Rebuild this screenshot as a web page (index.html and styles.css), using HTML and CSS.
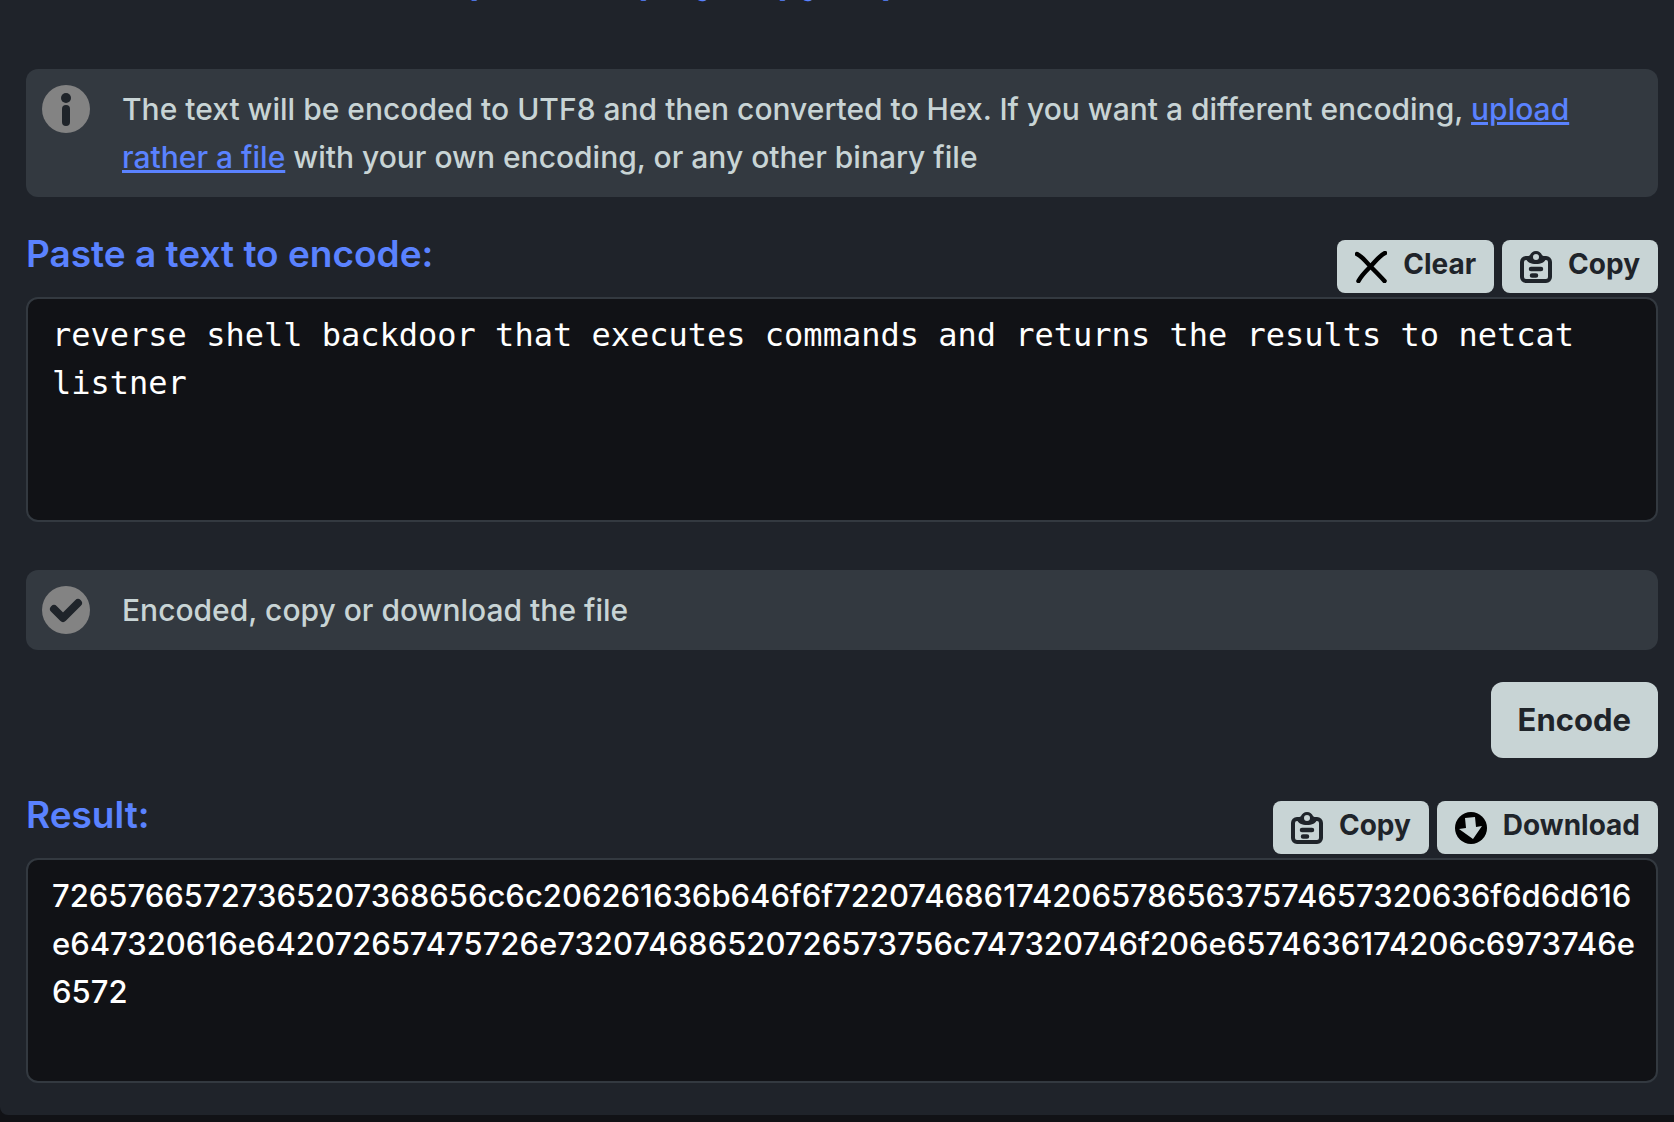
FILE: index.html
```
<!DOCTYPE html>
<html lang="en">
<head>
    <meta charset="UTF-8">
    <meta name="viewport" content="width=device-width, initial-scale=1.0">
    <title>Text to Hex</title>
    <link rel="stylesheet" href="styles.css">
</head>
<body>
    <svg class="sprite" aria-hidden="true">
        <symbol id="icon-copy" viewBox="0 0 32 32">
            <path d="M9 7H6a4 4 0 0 0-4 4v15a4 4 0 0 0 4 4h20a4 4 0 0 0 4-4V11a4 4 0 0 0-4-4h-3" fill="none" stroke="currentColor" stroke-width="4"/>
            <path fill-rule="evenodd" d="M16 0c-3 0-5 2-6 4-1 1-4 2-4 4 1 3 5 5 10 5s9-2 10-5c0-2-3-3-4-4-1-2-3-4-6-4zm0 3a3 3 0 1 1 0 6 3 3 0 0 1 0-6z" fill="currentColor"/>
            <path d="M11 18h10M12 24.500h4" fill="none" stroke="currentColor" stroke-width="4.500" stroke-linecap="round"/>
        </symbol>
    </svg>

    <main class="panel">
        <h1 class="title">Hex encoder online: imports display copy export</h1>

        <div class="message">
            <svg class="message-icon" viewBox="0 0 48 48" aria-hidden="true">
                <circle cx="24" cy="24" r="24" fill="#838383"/>
                <circle cx="24" cy="13" r="5" fill="#1f242a"/>
                <path d="M24 24v13" stroke="#1f242a" stroke-width="8" stroke-linecap="round"/>
            </svg>
            <p>The text will be encoded to UTF8 and then converted to Hex. If you want a different encoding, <a href="#">upload rather a file</a> with your own encoding, or any other binary file</p>
        </div>

        <div class="field-head">
            <label for="source">Paste a text to encode:</label>
            <div class="tools">
                <button type="button" class="tool">
                    <svg viewBox="0 0 32 32" aria-hidden="true"><path d="M2 3c6 3 9 8 14 13s9 9 13.500 14M30 2C24 5 20 11 15 16S6 25 3.500 30" fill="none" stroke="#000" stroke-width="4.500" stroke-linecap="round"/></svg>
                    <span>Clear</span>
                </button>
                <button type="button" class="tool">
                    <svg aria-hidden="true"><use href="#icon-copy"/></svg>
                    <span>Copy</span>
                </button>
            </div>
        </div>
        <textarea id="source" class="source" spellcheck="false">reverse shell backdoor that executes commands and returns the results to netcat listner</textarea>

        <div class="message">
            <svg class="message-icon" viewBox="0 0 48 48" aria-hidden="true">
                <circle cx="24" cy="24" r="24" fill="#838383"/>
                <path d="M12 23l9 9 15-15" fill="none" stroke="#1f242a" stroke-width="8" stroke-linecap="round" stroke-linejoin="round"/>
            </svg>
            <p>Encoded, copy or download the file</p>
        </div>

        <div class="actions">
            <button type="button" class="encode">Encode</button>
        </div>

        <div class="field-head">
            <label for="result">Result:</label>
            <div class="tools">
                <button type="button" class="tool">
                    <svg aria-hidden="true"><use href="#icon-copy"/></svg>
                    <span>Copy</span>
                </button>
                <button type="button" class="tool">
                    <svg viewBox="0 0 32 32" aria-hidden="true"><circle cx="16" cy="16" r="16" fill="#000"/><path d="M10 6l10-1 1 10 6-1-9 13L4 17l7-1z" fill="#c8d4d5"/></svg>
                    <span>Download</span>
                </button>
            </div>
        </div>
        <textarea id="result" class="result" readonly spellcheck="false">72657665727365207368656c6c206261636b646f6f72207468617420657865637574657320636f6d6d616e647320616e642072657475726e732074686520726573756c747320746f206e6574636174206c6973746e6572</textarea>
    </main>
</body>
</html>
```
FILE: styles.css
```
* {
    box-sizing: border-box;
}
body {
    margin: 0;
    background-color: #111216;
    color: #c8d4d5;
    font-family: Inter, Roboto, sans-serif;
    font-size: 30px;
    font-weight: 500;
    line-height: 48px;
}
.sprite {
    display: none;
}
.panel {
    background-color: #1f232a;
    padding: 0 16px 32px 26px;
    border-radius: 0 0 0 8px;
    overflow: hidden;
}
.title {
    margin: -45px 0 66px;
    color: #5a82ff;
    font-size: 40px;
    font-weight: 600;
    white-space: nowrap;
}
.message {
    display: flex;
    gap: 32px;
    margin-bottom: 32px;
    padding: 16px;
    background-color: #333940;
    border-radius: 12px;
}
.message-icon {
    flex: none;
    width: 48px;
    height: 48px;
}
.message p {
    margin: 0;
}
.message a {
    color: #5a82ff;
}
.field-head {
    display: flex;
    justify-content: space-between;
    height: 64px;
    margin-bottom: 4px;
}
.field-head label {
    color: #5a82ff;
    font-size: 37px;
    font-weight: 600;
    line-height: 50px;
}
.tools {
    display: flex;
    align-self: flex-end;
    gap: 8px;
}
button {
    border: none;
    background-color: #c8d4d5;
    color: #1f242a;
    font-family: inherit;
    font-weight: 700;
}
.tool {
    display: flex;
    align-items: center;
    gap: 16px;
    height: 53px;
    padding: 0 18px;
    border-radius: 8px;
    font-size: 28px;
}
.tool svg {
    width: 32px;
    height: 32px;
}
.tool span {
    padding-bottom: 6px;
}
textarea {
    display: block;
    width: 100%;
    height: 225px;
    padding: 12px 16px 12px 24px;
    border: 2px solid #333940;
    border-radius: 12px;
    outline: none;
    resize: none;
    background-color: #111216;
    color: #fff;
    line-height: 48px;
}
.source {
    margin-bottom: 48px;
    font-family: "DejaVu Sans Mono", monospace;
    font-size: 32px;
}
.result {
    font-family: inherit;
    font-size: 31px;
    font-weight: 500;
    word-break: break-all;
}
.actions {
    display: flex;
    justify-content: flex-end;
    margin-bottom: 32px;
}
.encode {
    padding: 14px 27px;
    border-radius: 12px;
    font-size: 31px;
    line-height: 48px;
}
```
